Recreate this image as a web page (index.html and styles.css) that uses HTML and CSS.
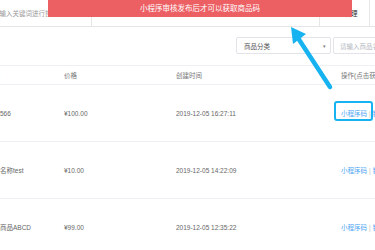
FILE: index.html
```html
<!DOCTYPE html>
<html lang="zh-CN">
<head>
    <meta charset="UTF-8">
    <meta name="viewport" content="width=device-width, initial-scale=1.0">
    <title>商品列表</title>
    <link rel="stylesheet" href="styles.css">
</head>
<body>
    <div class="page">
        <div class="topbar">
            <div class="tb-search">请输入关键词进行搜索</div>
            <div class="tb-mid"></div>
            <div class="tb-cell">商品管理</div>
            <div class="tb-cell"></div>
        </div>

        <div class="filters">
            <div class="select">
                <span>商品分类</span>
                <span class="caret">▾</span>
            </div>
            <div class="input">请输入商品名称</div>
        </div>

        <div class="table">
            <div class="row head">
                <div class="cell">名称</div>
                <div class="cell">价格</div>
                <div class="cell">创建时间</div>
                <div class="cell">操作(点击获取)</div>
            </div>
            <div class="row">
                <div class="cell">商品566</div>
                <div class="cell">¥100.00</div>
                <div class="cell">2019-12-05 16:27:11</div>
                <div class="cell ops"><a>小程序码</a><span class="sep">|</span><a>链接</a></div>
            </div>
            <div class="row">
                <div class="cell">商品名称test</div>
                <div class="cell">¥10.00</div>
                <div class="cell">2019-12-05 14:22:09</div>
                <div class="cell ops"><a>小程序码</a><span class="sep">|</span><a>链接</a></div>
            </div>
            <div class="row">
                <div class="cell">测试商品ABCD</div>
                <div class="cell">¥99.00</div>
                <div class="cell">2019-12-05 12:35:22</div>
                <div class="cell ops"><a>小程序码</a><span class="sep">|</span><a>链接</a></div>
            </div>
        </div>
    </div>

    <!-- toast message -->
    <div class="toast">小程序审核发布后才可以获取商品码</div>

    <!-- annotation -->
    <div class="mark"></div>
    <svg class="arrow" width="375" height="250" viewBox="0 0 375 250">
        <line x1="330" y1="87" x2="298" y2="38" stroke="#17b3f1" stroke-width="4.5" stroke-linecap="round"/>
        <polygon points="291,27 306,34 293,44" fill="#17b3f1"/>
    </svg>
</body>
</html>
```

FILE: styles.css
```css
body {
    margin: 0;
    width: 375px;
    height: 250px;
    overflow: hidden;
    position: relative;
    background: #fff;
    font-family: 'Liberation Sans', 'Noto Sans CJK SC', sans-serif;
    color: #666;
}

.page {
    margin-left: -23px;
    width: 460px;
}

.topbar {
    display: flex;
    height: 26px;
    border-bottom: 1px solid #e6e6e6;
    font-size: 6.5px;
}

.tb-search {
    width: 98px;
    padding-left: 16px;
    border-right: 1px solid #e6e6e6;
    color: #999;
    line-height: 28px;
    white-space: nowrap;
    overflow: hidden;
}

.tb-mid {
    width: 227px;
    border-right: 1px solid #e6e6e6;
}

.tb-cell {
    width: 49px;
    border-right: 1px solid #e6e6e6;
    color: #333;
    text-align: center;
    line-height: 28px;
}

.filters {
    display: flex;
    justify-content: flex-end;
    gap: 2px;
    height: 38px;
    box-sizing: border-box;
    padding: 10px 10px 0;
    font-size: 6.5px;
}

.select, .input {
    height: 17px;
    box-sizing: border-box;
    border: 1px solid #e2e4ea;
    border-radius: 2px;
    display: flex;
    align-items: center;
}

.select {
    width: 95px;
    padding: 0 4px 0 7px;
    justify-content: space-between;
    color: #555;
}

.select .caret {
    font-size: 5px;
    color: #777;
}

.input {
    width: 94px;
    padding-left: 6px;
    color: #b4b8c0;
}

.table {
    border-top: 1px solid #eef0f4;
    font-size: 6.5px;
}

.row {
    display: grid;
    grid-template-columns: 77px 112px 165px 1fr;
    align-items: center;
    height: 56px;
    border-bottom: 1px solid #eef0f4;
    white-space: nowrap;
}

.row.head {
    height: 18px;
    color: #777;
}

.cell {
    padding-left: 10px;
    overflow: hidden;
}

.ops a {
    color: #4aa3f5;
}

.ops .sep {
    margin: 0 2px;
    color: #bbb;
}

.toast {
    position: absolute;
    top: 0;
    left: 48px;
    width: 304px;
    height: 17px;
    line-height: 17px;
    background: #ec6064;
    color: #fff;
    text-align: center;
    font-size: 7.5px;
}

.mark {
    position: absolute;
    left: 334px;
    top: 101px;
    width: 35px;
    height: 16px;
    border: 2px solid #17b3f1;
    border-radius: 3px;
}

.arrow {
    position: absolute;
    left: 0;
    top: 0;
    pointer-events: none;
}
```
